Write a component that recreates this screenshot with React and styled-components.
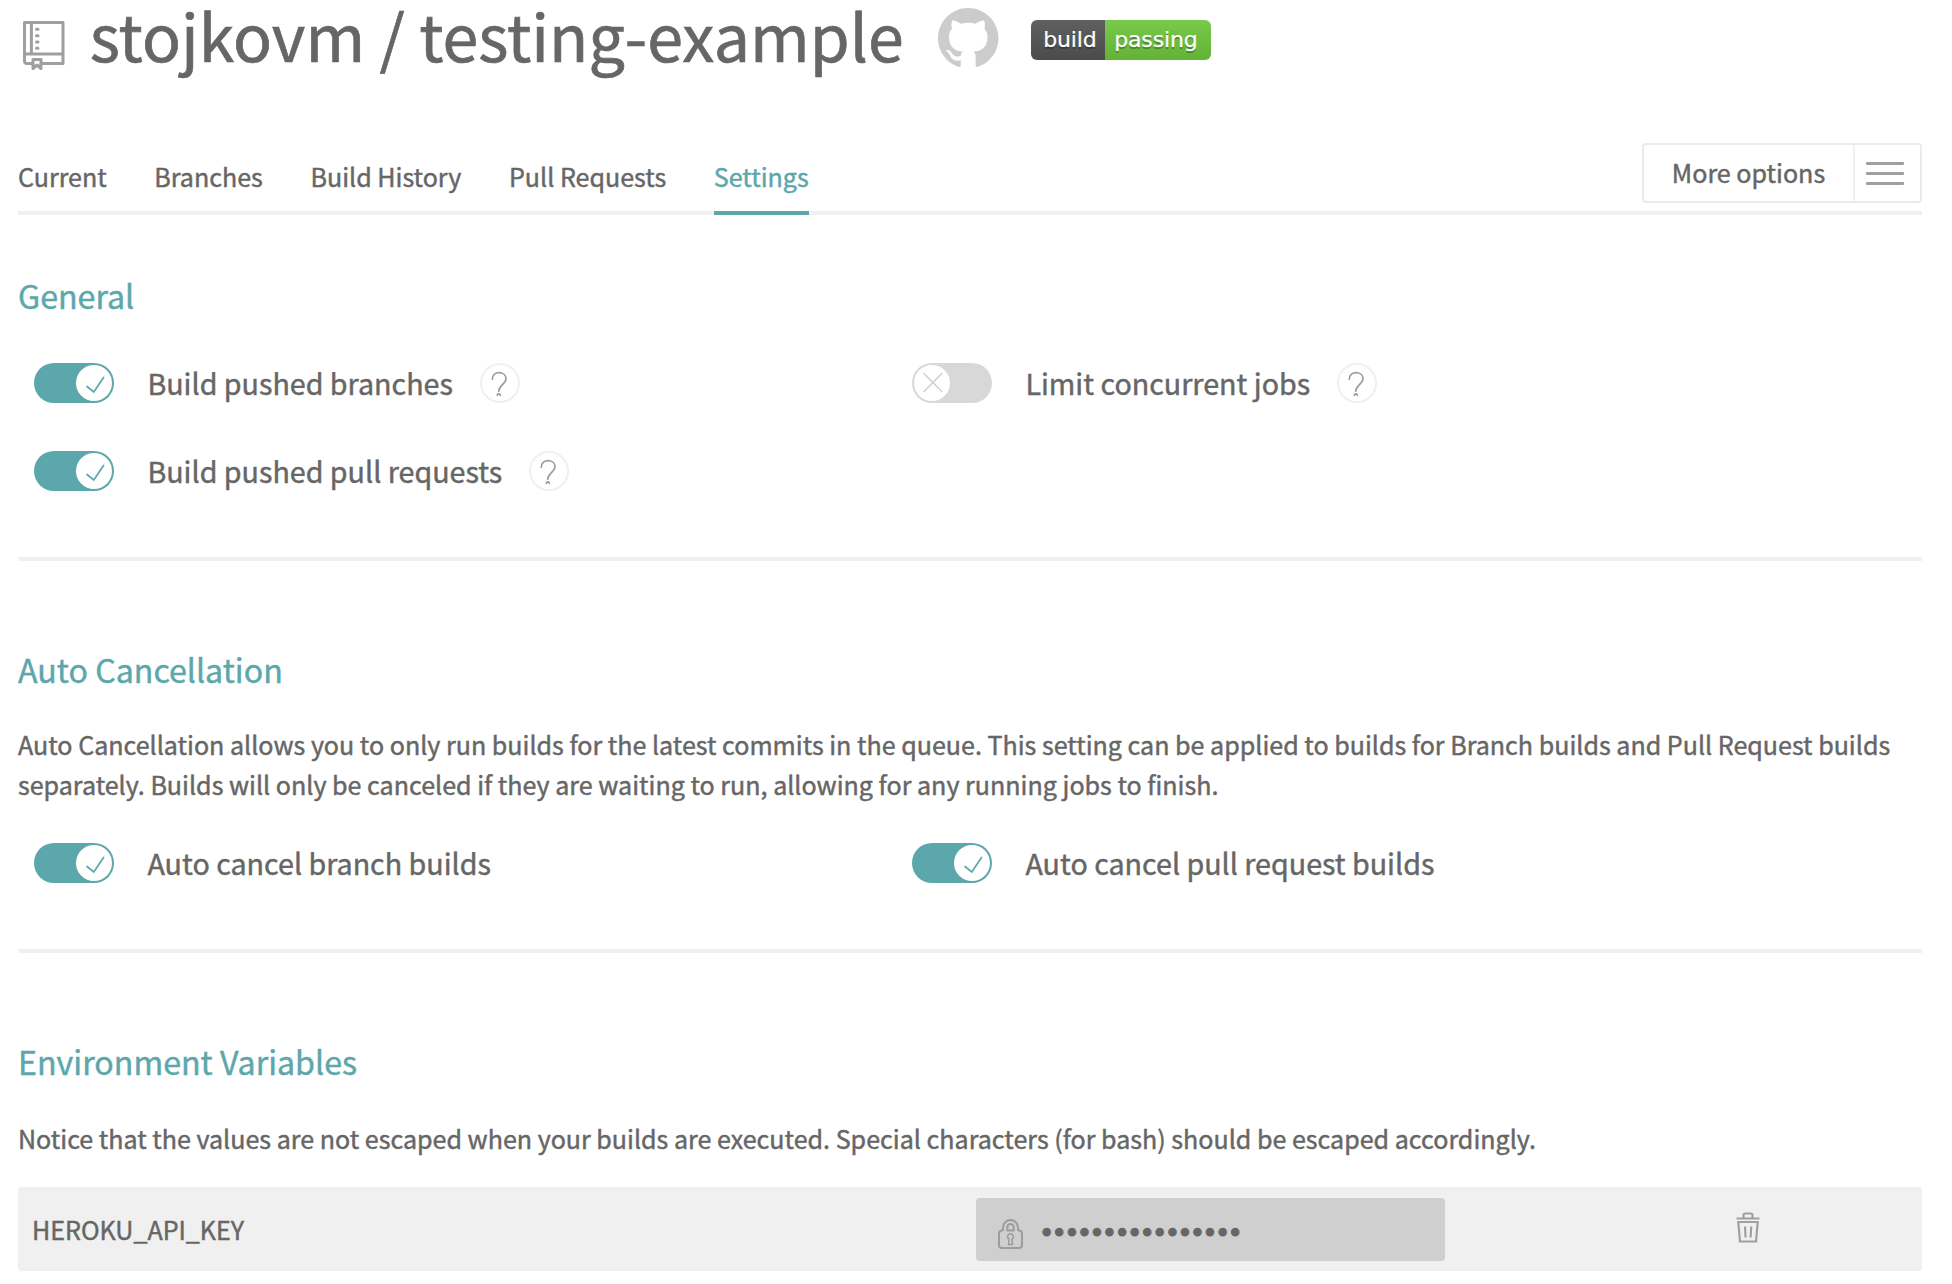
import React from "react";
import styled, { createGlobalStyle } from "styled-components";

const teal = "#5ca7ac";
const text = "#666";
const line = "#f0f0f0";

const GlobalStyle = createGlobalStyle`
  *, *::before, *::after { box-sizing: border-box; }
  body {
    margin: 0;
    background: #fff;
    color: ${text};
    font-family: "Noto Sans CJK SC", "Noto Sans", sans-serif;
    font-size: 25.07px;
    line-height: 40px;
    -webkit-font-smoothing: antialiased;
    -webkit-text-stroke: 0.45px currentColor;
  }
`;

const Page = styled.main`
  min-height: 1284px;
  padding: 0 30px 0 18px;
`;

const Header = styled.header`
  display: flex;
  align-items: flex-start;
  height: 143px;
`;

const BookIcon = styled.svg`
  flex: none;
  width: 42px;
  height: 50px;
  margin: 21px 24.8px 0 5px;
  fill: none;
  stroke: #9f9f9f;
  stroke-width: 3;
  stroke-linejoin: round;
  stroke-linecap: round;
`;

const Title = styled.h1`
  margin: 0;
  font-size: 64.48px;
  line-height: 68px;
  font-weight: 400;
  white-space: nowrap;
  -webkit-text-stroke-width: 0.7px;
`;

const GithubMark = styled.svg`
  flex: none;
  width: 60.5px;
  height: 60.5px;
  margin: 8px 32.5px 0 34.5px;
  fill: #ccc;
`;

const Badge = styled.span`
  display: flex;
  width: 180px;
  height: 40px;
  margin-top: 20px;
  border-radius: 6px;
  overflow: hidden;
  color: #fff;
  font: 22px/40px "DejaVu Sans", sans-serif;
  letter-spacing: -0.15px;
  text-shadow: 0 2px 0 rgba(1, 1, 1, 0.3);
  -webkit-text-stroke-width: 0.2px;
`;

const BadgePart = styled.span`
  flex: ${(p) => (p.$passing ? "1" : "0 0 74px")};
  padding-left: ${(p) => (p.$passing ? "9px" : "12px")};
  background: ${(p) =>
    p.$passing
      ? "linear-gradient(#78c94c, #62b236)"
      : "linear-gradient(#606060, #4b4b4b)"};
`;

const Nav = styled.nav`
  display: flex;
  justify-content: space-between;
  align-items: flex-start;
  height: 72px;
  box-shadow: inset 0 -4px ${line};
`;

const Tabs = styled.div`
  display: flex;
  align-self: flex-end;
  gap: 47.6px;
`;

const Tab = styled.a`
  padding-bottom: 15px;
  border-bottom: 4px solid ${(p) => (p.$active ? teal : "transparent")};
  color: ${(p) => (p.$active ? teal : text)};
  white-space: nowrap;
`;

const MoreOptions = styled.button`
  display: flex;
  width: 280px;
  height: 60px;
  padding: 0;
  border: 2px solid #ebebeb;
  border-radius: 4px;
  background: #fff;
  color: ${text};
  font: inherit;
`;

const MoreLabel = styled.span`
  flex: 1;
  line-height: 54px;
  text-align: center;
`;

const Burger = styled.span`
  display: flex;
  flex-direction: column;
  align-items: center;
  justify-content: center;
  gap: 7px;
  width: 67px;
  padding-right: 5px;
  border-left: 2px solid ${line};
`;

const BurgerLine = styled.i`
  width: 38px;
  height: 3px;
  border-radius: 1px;
  background: #a0a0a0;
`;

const Section = styled.section`
  padding: ${(p) => p.$top || 88}px 0 66px;
  border-bottom: ${(p) => (p.$last ? "0" : `4px solid ${line}`)};
`;

const Heading = styled.h2`
  margin: 0;
  color: ${teal};
  font-size: 32.16px;
  font-weight: 400;
  line-height: 40px;
`;

const Copy = styled.p`
  margin: ${(p) => p.$top}px 0 0;
`;

const Options = styled.div`
  display: grid;
  grid-template-columns: 878px 1fr;
  gap: 48px 0;
  margin-top: ${(p) => p.$top}px;
  padding-left: 16px;
`;

const Option = styled.div`
  display: flex;
  align-items: center;
  height: 40px;
`;

const Switch = styled.span`
  display: flex;
  justify-content: ${(p) => (p.$on ? "flex-end" : "flex-start")};
  width: 80px;
  height: 40px;
  padding: 2px;
  border-radius: 20px;
  background: ${(p) => (p.$on ? teal : "#d8d8d8")};
`;

const Knob = styled.svg`
  width: 36px;
  height: 36px;
  border-radius: 50%;
  background: #fff;
  fill: none;
  stroke: ${(p) => (p.$on ? teal : "#d4d4d4")};
  stroke-width: 1.7;
  stroke-linecap: round;
`;

const OptionLabel = styled.span`
  margin: 0 27.3px 0 33.4px;
  font-size: 28.66px;
  white-space: nowrap;
`;

const Help = styled.svg`
  width: 40px;
  height: 40px;
  border: 2px solid ${line};
  border-radius: 50%;
  fill: none;
  stroke: #9d9d9d;
  stroke-width: 1.7;
  stroke-linecap: round;
`;

const VariableRow = styled.div`
  display: grid;
  grid-template-columns: 944px 469px 1fr;
  align-items: center;
  height: 84px;
  margin-top: 29px;
  padding-left: 14px;
  border-radius: 4px;
  background: ${line};
`;

const Secret = styled.div`
  display: flex;
  align-items: center;
  height: 63px;
  padding-left: 22px;
  border-radius: 4px;
  background: #cfcfcf;
`;

const LockIcon = styled.svg`
  width: 25px;
  height: 30px;
  margin: 10px 16px 0 0;
  fill: none;
  stroke: #9c9c9c;
  stroke-width: 2;
  stroke-linejoin: round;
`;

const Dots = styled.span`
  padding-top: 7px;
  font-family: "DejaVu Sans", sans-serif;
  font-size: 26px;
  letter-spacing: -2.77px;
  -webkit-text-stroke-width: 1px;
`;

const TrashIcon = styled.svg`
  width: 24px;
  height: 31px;
  margin: -3px 0 0 291px;
  fill: none;
  stroke: #a0a0a0;
  stroke-width: 2.2;
`;

function Toggle({ on, label, help }) {
  return (
    <Option>
      <Switch $on={on}>
        <Knob $on={on} viewBox="0 0 36 36">
          {on ? (
            <path d="M11 21.5 17.8 27 27.5 12.5" />
          ) : (
            <path d="M10 8.7 27.8 26.5M27.8 8.7 10 26.5" />
          )}
        </Knob>
      </Switch>
      <OptionLabel>{label}</OptionLabel>
      {help && (
        <Help viewBox="0 0 36 36">
          <path d="M10.3 14.2C10.3 10 13.3 7.7 17 7.7c4 0 7 2.4 7 6 0 5-6.8 6.5-7.3 12.5" />
          <path d="M15.3 30.3a1.5 1.5 0 0 1 3 0" />
        </Help>
      )}
    </Option>
  );
}

export default function App() {
  const tabs = ["Current", "Branches", "Build History", "Pull Requests", "Settings"];
  return (
    <>
      <GlobalStyle />
      <Page>
        <Header>
          <BookIcon viewBox="0 0 42 50">
            <path d="M1.5 1.5H40V33H1.5ZM8.4 1.5V33M1.5 33V40q0 2.5 2.5 2.5H9M18 42.5H40V33" />
            <path d="M10 47.5V38.5H18V47.5L14 44Z" />
            <path d="M13.5 8.3h1.5M13.5 14.7h1.5M13.5 21h1.5M13.5 27.3h1.5" />
          </BookIcon>
          <Title>stojkovm / testing-example</Title>
          <GithubMark viewBox="0 0 24 24">
            <path d="M12 0C5.37 0 0 5.37 0 12c0 5.303 3.438 9.8 8.205 11.385.6.113.82-.258.82-.577 0-.285-.01-1.04-.015-2.04-3.338.724-4.042-1.61-4.042-1.61C4.422 17.77 3.633 17.403 3.633 17.403c-1.087-.744.084-.729.084-.729 1.205.084 1.838 1.236 1.838 1.236 1.07 1.835 2.809 1.305 3.495.998.108-.776.417-1.305.76-1.605-2.665-.3-5.466-1.332-5.466-5.93 0-1.31.465-2.38 1.235-3.22-.135-.303-.54-1.523.105-3.176 0 0 1.005-.322 3.3 1.23.96-.267 1.98-.399 3-.405 1.02.006 2.04.138 3 .405 2.28-1.552 3.285-1.23 3.285-1.23.645 1.653.24 2.873.12 3.176.765.84 1.23 1.91 1.23 3.22 0 4.61-2.805 5.625-5.475 5.92.42.36.81 1.096.81 2.22 0 1.606-.015 2.896-.015 3.286 0 .315.21.69.825.57C20.565 21.795 24 17.295 24 12c0-6.63-5.373-12-12-12" />
          </GithubMark>
          <Badge>
            <BadgePart>build</BadgePart>
            <BadgePart $passing>passing</BadgePart>
          </Badge>
        </Header>

        <Nav>
          <Tabs>
            {tabs.map((name) => (
              <Tab key={name} $active={name === "Settings"}>{name}</Tab>
            ))}
          </Tabs>
          <MoreOptions>
            <MoreLabel>More options</MoreLabel>
            <Burger>
              <BurgerLine />
              <BurgerLine />
              <BurgerLine />
            </Burger>
          </MoreOptions>
        </Nav>

        <Section $top={60}>
          <Heading>General</Heading>
          <Options $top={48}>
            <Toggle on help label="Build pushed branches" />
            <Toggle help label="Limit concurrent jobs" />
            <Toggle on help label="Build pushed pull requests" />
          </Options>
        </Section>

        <Section>
          <Heading>Auto Cancellation</Heading>
          <Copy $top={35}>
            Auto Cancellation allows you to only run builds for the latest commits in the queue. This setting can be applied to builds for Branch builds and Pull Request builds separately. Builds will only be canceled if they are waiting to run, allowing for any running jobs to finish.
          </Copy>
          <Options $top={39}>
            <Toggle on label="Auto cancel branch builds" />
            <Toggle on label="Auto cancel pull request builds" />
          </Options>
        </Section>

        <Section $last>
          <Heading>Environment Variables</Heading>
          <Copy $top={37}>
            Notice that the values are not escaped when your builds are executed. Special characters (for bash) should be escaped accordingly.
          </Copy>
          <VariableRow>
            <span>HEROKU_API_KEY</span>
            <Secret>
              <LockIcon viewBox="0 0 25 30">
                <path d="M5 11V8.5a7.5 7.5 0 0 1 15 0V11C22.5 11.6 24 12.5 24 14V26q0 3-3 3H4q-3 0-3-3V14c0-1.5 1.5-2.4 4-3Z" />
                <path d="M9.3 11.6V8.3a3.2 3.2 0 0 1 6.4 0v3.3Z" />
                <path d="M11 20.2a2.9 2.9 0 1 1 3 0l.5 5.3h-4Z" strokeWidth="1.5" />
              </LockIcon>
              <Dots>••••••••••••••••</Dots>
            </Secret>
            <TrashIcon viewBox="0 0 24 31">
              <path d="M.5 6.5H23.5M7.500 6V3q0-1.5 1.5-1.5h6q1.5 0 1.500 1.5v3M2.3 10H21.7L20 29.5H4ZM9 14.5l.6 11M15.2 14.5l-.6 11" />
            </TrashIcon>
          </VariableRow>
        </Section>
      </Page>
    </>
  );
}
